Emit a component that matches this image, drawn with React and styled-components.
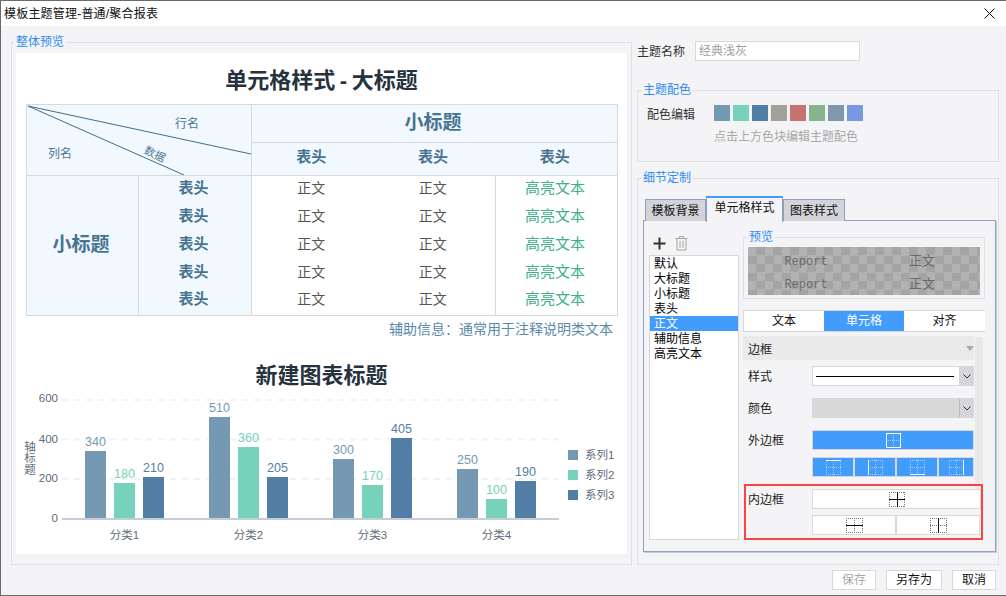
import React from "react";
import styled, { createGlobalStyle } from "styled-components";

const SANS = `"Liberation Sans", "Noto Sans CJK SC", sans-serif`;
const BLUE = "#429cfc";
const LINE = "#d8d8dc";
const GRID = "1px solid #d5d8dc";

const Global = createGlobalStyle`
  html, body { margin: 0; padding: 0; background: #f4f4f6; overflow: hidden; }
  * { box-sizing: border-box; }
  body { font-family: ${SANS}; font-size: 12px; color: #222; }
`;

const Win = styled.div`
  width: 1006px; height: 596px; display: flex; flex-direction: column;
  border-top: 1px solid #6a6a6a; border-bottom: 1px solid #6a6a6a; border-left: 1px solid #6a6a6a;
  background: #f4f4f6;
`;
const TitleBar = styled.div`
  height: 25px; flex: none; background: #fff; display: flex; align-items: center; justify-content: space-between;
  padding: 0 11px 3px 3px; color: #111; font-size: 12px; letter-spacing: 0.2px;
`;
const CloseBtn = styled.svg`
  width: 11px; height: 11px; margin-top: 3px; display: block;
`;
const Main = styled.div`
  flex: none; height: 530px; margin-top: 9px; padding-left: 10px; display: flex; gap: 5px;
`;
const Field = styled.fieldset`
  margin: 0; min-width: 0; border: 1px solid #dfe0e4; display: block;
  padding: ${(p) => p.$pad};
  margin-top: ${(p) => p.$mt || 0}px;
  width: ${(p) => p.$w || "auto"};
  height: ${(p) => p.$h || "auto"};
`;
const Legend = styled.legend`
  padding: 0 2px; margin-left: ${(p) => p.$ml}px; height: 14px; line-height: 14px;
  font-size: 12px; color: #2f8cf2;
`;
const Pane = styled.div`
  background: #fff; width: 611px; height: 501px; display: flex; flex-direction: column; align-items: center;
`;
const BigTitle = styled.div`
  font-size: 22px; font-weight: 700; color: #27323f; height: 51px; line-height: 31px; padding-top: 12px; flex: none;
`;
const Dash = styled.span`
  padding: 0 4.5px;
`;
const Sheet = styled.table`
  table-layout: fixed; border-collapse: collapse; width: 592px; align-self: flex-start; margin-left: 10px; flex: none;
`;
const Cell = styled.td`
  padding: 0 3px 4px 0; text-align: center;
  border-top: ${(p) => (p.$edges.includes("t") ? GRID : "0")};
  border-left: ${(p) => (p.$edges.includes("l") ? GRID : "0")};
  border-bottom: ${(p) => (p.$edges.includes("b") ? GRID : "0")};
  border-right: ${(p) => (p.$edges.includes("r") ? GRID : "0")};
  background: ${(p) => (p.$tint ? "#f1f8fe" : "#fff")};
  color: #555; font-size: 14px; line-height: 20px;
`;
const HeadCell = styled(Cell)`
  color: #47748f; font-weight: 700;
  font-size: ${(p) => (p.$big ? "19px" : "15px")};
  padding-bottom: ${(p) => (p.$big ? "2px" : "4px")};
`;
const HiCell = styled(Cell)`
  color: #3daf8a; font-size: 15px;
`;
const Row = styled.tr`
  height: ${(p) => p.$h}px;
`;
const CornerCell = styled.td`
  position: relative; padding: 0; border: ${GRID}; background: #f1f8fe;
`;
const CornerLines = styled.svg`
  position: absolute; left: 0; top: 0; width: 224px; height: 70px; display: block;
`;
const CornerText = styled.span`
  position: absolute; left: ${(p) => p.$x}px; top: ${(p) => p.$y}px; line-height: 14px; font-size: ${(p) => p.$s || 12}px;
  color: #4d7690; white-space: nowrap;
  transform: translate(-50%, -50%) rotate(${(p) => p.$r || 0}deg);
`;
const Note = styled.div`
  align-self: stretch; height: 26px; line-height: 26px; flex: none; text-align: right; padding-right: 14px;
  color: #5a8aa8; font-size: 14px;
`;
const ChartTitle = styled.div`
  font-size: 22px; font-weight: 700; color: #27323f; height: 48px; line-height: 30px; padding-top: 19px; flex: none;
`;
const ChartSvg = styled.svg`
  width: 611px; height: 164px; display: block; flex: none;
  text { font-family: ${SANS}; }
`;
const AxisTitle = styled.text`
  writing-mode: vertical-rl; text-anchor: middle; font-size: 11.5px; fill: #5c6c7b;
`;

const Side = styled.div`
  width: 362px; flex: none; display: flex; flex-direction: column;
`;
const NameRow = styled.div`
  display: flex; align-items: center; margin-top: 6px; margin-bottom: 22px; height: 20px;
`;
const NameLabel = styled.span`
  width: 58px; font-size: 12px; color: #333; margin-top: -2px;
`;
const NameInput = styled.div`
  width: 165px; height: 20px; background: #fff; border: 1px solid #d7d9dc; color: #a0a0a0; padding-left: 3px;
  line-height: 18px;
`;
const PaletteRow = styled.div`
  display: flex; align-items: center; height: 16px;
`;
const PaletteLabel = styled.span`
  width: 67px; color: #333;
`;
const Swatches = styled.div`
  display: flex; gap: 3px;
`;
const Swatch = styled.div`
  width: 16px; height: 16px; background: ${(p) => p.$c};
`;
const Hint = styled.div`
  margin: 8px 0 0 67px; color: #a8a8a8; line-height: 16px;
`;
const Tabs = styled.div`
  display: flex; align-items: flex-end; padding-left: 2px; height: 25px; position: relative; z-index: 1;
`;
const Tab = styled.div`
  width: ${(p) => p.$w}px; text-align: center; color: #111; font-size: 12px;
  ${(p) =>
    p.$on
      ? `height: 26px; margin-bottom: -1px; background: #f4f4f6; border-top: 2px solid ${BLUE}; border-left: 1px solid #8aa0bd; border-right: 1px solid #8aa0bd; line-height: 21px;`
      : `height: 22px; background: #d3d3d9; border: 1px solid #8aa0bd; border-bottom: 0; line-height: 22px;`}
`;
const Panel = styled.div`
  width: 353px; height: 332px; border: 1px solid #8fa3c0; box-shadow: 1px 1px 0 #c9ccd2;
  display: flex; padding-left: 5px; margin-top: -1px;
`;
const ListCol = styled.div`
  width: 90px; flex: none; padding-top: 14px;
`;
const Tools = styled.div`
  display: flex; align-items: center; gap: 9px; height: 16px; margin-bottom: 4px; padding-left: 4px;
`;
const ToolIcon = styled.svg`
  display: block; width: ${(p) => p.$w}px; height: 16px;
`;
const StyleList = styled.div`
  height: 285px; background: #fff; border: 1px solid ${LINE};
`;
const StyleItem = styled.div`
  height: 15px; line-height: 17px; padding-left: 4px; font-size: 12px; color: ${(p) => (p.$on ? "#fff" : "#000")};
  background: ${(p) => (p.$on ? BLUE : "transparent")};
`;
const EditCol = styled.div`
  width: 242px; margin-left: 4px; flex: none; padding-top: 9px; position: relative;
`;
const Checker = styled.div`
  width: 232px; height: 48px; display: grid; grid-template-columns: 116px 116px; grid-auto-rows: 23px; padding-top: 2px;
  background: repeating-conic-gradient(#a4a4a4 0 25%, #b2b2b2 0 50%) 0 0 / 17px 17px;
  color: #6a6a6a; text-align: center; line-height: 23px; font-size: 13px;
`;
const Mono = styled.span`
  font-family: "Liberation Mono", monospace; font-size: 12px; padding-top: 2px;
`;
const Seg = styled.div`
  display: grid; grid-template-columns: 80px 80px 81px; height: 22px; margin-top: 11px; background: #fff;
  border-top: 1px solid ${LINE}; border-bottom: 1px solid ${LINE}; border-left: 1px solid ${LINE};
`;
const SegItem = styled.div`
  text-align: center; line-height: 20px; color: ${(p) => (p.$on ? "#fff" : "#111")};
  background: ${(p) => (p.$on ? BLUE : "transparent")};
`;
const Form = styled.div`
  position: relative; margin-top: 4px;
`;
const Scroll = styled.div`
  position: absolute; left: 232px; top: 1px; width: 8px; height: 157px; background: #e8e8e8; border-radius: 3px;
`;
const GroupHead = styled.div`
  width: 231px; height: 24px; background: #eaeaea; display: flex; align-items: center; justify-content: space-between;
  padding: 0 0 0 5px; color: #222; font-size: 12px; margin-bottom: 6px;
`;
const Caret = styled.i`
  width: 0; height: 0; border-left: 4px solid transparent; border-right: 4px solid transparent;
  border-top: 5px solid #a8a8a8; margin-right: 0;
`;
const FormRow = styled.div`
  display: flex; align-items: center; margin-bottom: ${(p) => p.$mb ?? 12}px; position: relative;
`;
const FormLabel = styled.span`
  width: 69px; padding-left: 5px; flex: none; color: #222; font-size: 12px; margin-top: -2px;
`;
const SelectBox = styled.div`
  width: 162px; height: 20px; display: flex; align-items: stretch; border: 1px solid ${LINE};
  background: ${(p) => (p.$fill ? "#d8d8d8" : "#fff")};
`;
const SelectMain = styled.div`
  flex: 1; display: flex; align-items: center; padding: 0 3px;
`;
const SolidLine = styled.div`
  width: 138px; height: 1px; background: #000;
`;
const Chevron = styled.div`
  width: 14px; flex: none; background: #d6d6d9; border-left: 1px solid ${(p) => (p.$dark ? "#bbb" : "#d6d6d9")};
  display: flex; align-items: center; justify-content: center;
`;
const ChevronSvg = styled.svg`
  width: 8px; height: 5px; display: block;
`;
const IconBtn = styled.div`
  height: ${(p) => p.$h || 20}px; display: flex; align-items: center; justify-content: center;
  border: 1px solid ${LINE}; background: ${(p) => (p.$on ? BLUE : "#fff")}; width: ${(p) => (p.$w ? p.$w + "px" : "auto")};
`;
const OuterFour = styled.div`
  display: grid; grid-template-columns: 42px 42px 42px 36px; width: 162px;
`;
const FlagBox = styled.div`
  width: 239px; margin-left: 1px; height: 56px; border: 2px solid #fb4346; position: relative;
  padding-top: 3px; margin-top: -5px;
`;
const InnerRow = styled.div`
  display: flex; align-items: center; height: 20px; margin-bottom: 6px;
`;
const InnerLabel = styled.span`
  width: 66px; flex: none; padding-left: 2px; color: #222; margin-top: -2px;
`;
const InnerTwo = styled.div`
  display: grid; grid-template-columns: 84px 84px; width: 168px;
`;
const Foot = styled.div`
  flex: none; display: flex; justify-content: flex-end; gap: 10px; padding: 5px 10px 0 0; height: 25px;
`;
const FootBtn = styled.div`
  width: ${(p) => p.$w}px; height: 20px; border: 1px solid ${LINE}; background: #fff; text-align: center; line-height: 18px;
  color: ${(p) => (p.$off ? "#a8a8a8" : "#111")};
`;

const GridLines = ({ w = 15, h = 15, solid = [], solidColor, dotColor }) => {
  const mx = Math.floor(w / 2) + 0.5, my = Math.floor(h / 2) + 0.5;
  const lines = {
    top: [0, 0.5, w, 0.5], bottom: [0, h - 0.5, w, h - 0.5], left: [0.5, 0, 0.5, h], right: [w - 0.5, 0, w - 0.5, h],
    h: [0, my, w, my], v: [mx, 0, mx, h],
  };
  const keys = Object.keys(lines);
  const ordered = [...keys.filter((k) => !solid.includes(k)), ...keys.filter((k) => solid.includes(k))];
  return (
    <svg width={w} height={h} viewBox={`0 0 ${w} ${h}`} style={{ display: "block" }}>
      {ordered.map((k) => {
        const [a, b, c, d] = lines[k];
        const on = solid.includes(k);
        return <line key={k} x1={a} y1={b} x2={c} y2={d} stroke={on ? solidColor : dotColor} strokeWidth="1" strokeDasharray={on ? undefined : "1 1"} />;
      })}
    </svg>
  );
};

const Down = () => (
  <ChevronSvg viewBox="0 0 8 5"><path d="M.5.5 4 4 7.5.5" fill="none" stroke="#333" strokeWidth="1" /></ChevronSvg>
);

const colors = ["#7599b3", "#76d2ba", "#527ea6"];
const groups = [
  { name: "分类1", x: [85, 114, 143], v: [340, 180, 210], top: [451, 483, 477] },
  { name: "分类2", x: [209, 238, 267], v: [510, 360, 205], top: [417, 447, 477] },
  { name: "分类3", x: [333, 362, 391], v: [300, 170, 405], top: [459, 485, 438] },
  { name: "分类4", x: [457, 486, 515], v: [250, 100, 190], top: [469, 499, 481] },
];
const palette = ["#7599b3", "#76d2ba", "#527ea6", "#a3a098", "#c87372", "#85b48f", "#8097ae", "#7a98e0"];
const styleNames = ["默认", "大标题", "小标题", "表头", "正文", "辅助信息", "高亮文本"];

const Chart = () => (
  <ChartSvg viewBox="16 390 611 164">
    {[400, 439.5, 479].map((y) => (
      <line key={y} x1="62" x2="559" y1={y} y2={y} stroke="#eef3f7" strokeWidth="2" strokeDasharray="6 6" />
    ))}
    <rect x="62" y="518" width="497" height="2" fill="#c3ced8" />
    {[["600", 402], ["400", 443], ["200", 482], ["0", 522]].map(([t, y]) => (
      <text key={t} x="58" y={y} textAnchor="end" fontSize="11.5" fill="#5c6c7b">{t}</text>
    ))}
    <AxisTitle x="29" y="458">轴标题</AxisTitle>
    {groups.map((g) => (
      <g key={g.name}>
        {g.x.map((x, i) => (
          <g key={x}>
            <rect x={x} y={g.top[i]} width="21" height={518 - g.top[i]} fill={colors[i]} />
            <text x={x + 10.5} y={g.top[i] - 5} textAnchor="middle" fontSize="12.5" fill={colors[i]}>{g.v[i]}</text>
          </g>
        ))}
        <text x={g.x[1] + 10.5} y="539" textAnchor="middle" fontSize="11.5" fill="#5c6c7b">{g.name}</text>
      </g>
    ))}
    {colors.map((c, i) => (
      <g key={c}>
        <rect x="568" y={450 + i * 20} width="10" height="10" fill={c} />
        <text x="585" y={459 + i * 20} fontSize="11.5" fill="#5c6c7b">系列{i + 1}</text>
      </g>
    ))}
  </ChartSvg>
);

const PreviewTable = () => (
  <Sheet>
    <colgroup>
      <col style={{ width: 112 }} /><col style={{ width: 113 }} /><col style={{ width: 122 }} /><col style={{ width: 122 }} /><col style={{ width: 122 }} />
    </colgroup>
    <tbody>
      <Row $h={38}>
        <CornerCell colSpan={2} rowSpan={2}>
          <CornerLines viewBox="0 0 224 70">
            <line x1="1" y1="1" x2="224" y2="49" stroke="#3f6f8a" strokeWidth="1" />
            <line x1="1" y1="1" x2="157" y2="70" stroke="#3f6f8a" strokeWidth="1" />
          </CornerLines>
          <CornerText $x={160} $y={19}>行名</CornerText>
          <CornerText $x={33} $y={49}>列名</CornerText>
          <CornerText $x={128} $y={49} $r={25} $s={11}>数据</CornerText>
        </CornerCell>
        <HeadCell colSpan={3} $tint $big $edges="tlbr">小标题</HeadCell>
      </Row>
      <Row $h={33}>
        <HeadCell $tint $edges="tlb">表头</HeadCell>
        <HeadCell $tint $edges="tb">表头</HeadCell>
        <HeadCell $tint $edges="tbr">表头</HeadCell>
      </Row>
      {[0, 1, 2, 3, 4].map((i) => {
        const bottom = i === 4 ? "b" : "";
        return (
          <Row key={i} $h={28}>
            {i === 0 && <HeadCell rowSpan={5} $tint $big $edges="tlbr">小标题</HeadCell>}
            <HeadCell $tint $edges={"lr" + bottom}>表头</HeadCell>
            <Cell $edges={bottom}>正文</Cell>
            <Cell $edges={bottom}>正文</Cell>
            <HiCell $edges={"lr" + bottom}>高亮文本</HiCell>
          </Row>
        );
      })}
    </tbody>
  </Sheet>
);

export default function App() {
  return (
    <>
      <Global />
      <Win>
        <TitleBar>
          <span>模板主题管理-普通/聚合报表</span>
          <CloseBtn viewBox="0 0 11 11"><path d="M.5.5l10 10M10.5.5l-10 10" stroke="#111" strokeWidth="1" fill="none" /></CloseBtn>
        </TitleBar>
        <Main>
          <Field $pad="4px 3px 0 4px" $w="621px" $h="530px">
            <Legend $ml={-2}>整体预览</Legend>
            <Pane>
              <BigTitle>单元格样式<Dash>-</Dash>大标题</BigTitle>
              <PreviewTable />
              <Note>辅助信息：通常用于注释说明类文本</Note>
              <ChartTitle>新建图表标题</ChartTitle>
              <Chart />
            </Pane>
          </Field>
          <Side>
            <NameRow>
              <NameLabel>主题名称</NameLabel>
              <NameInput>经典浅灰</NameInput>
            </NameRow>
            <Field $pad="8px 8px 0 9px" $h="79px">
              <Legend $ml={-6}>主题配色</Legend>
              <PaletteRow>
                <PaletteLabel>配色编辑</PaletteLabel>
                <Swatches>{palette.map((c) => <Swatch key={c} $c={c} />)}</Swatches>
              </PaletteRow>
              <Hint>点击上方色块编辑主题配色</Hint>
            </Field>
            <Field $pad="11px 1px 0 5px" $h="394px" $mt={9}>
              <Legend $ml={-2}>细节定制</Legend>
              <Tabs>
                <Tab $w={61}>模板背景</Tab>
                <Tab $w={77} $on>单元格样式</Tab>
                <Tab $w={62}>图表样式</Tab>
              </Tabs>
              <Panel>
                <ListCol>
                  <Tools>
                    <ToolIcon $w={13} viewBox="0 0 13 16"><path d="M6.5 2.5v12M.5 8.5h12" stroke="#333" strokeWidth="2" fill="none" /></ToolIcon>
                    <ToolIcon $w={13} viewBox="0 0 13 16"><path d="M.5 3.5h12M4.5 3.5v-2h4v2M2 3.5v11.5h9V3.5M5 6v7M8 6v7" stroke="#a4a4a4" strokeWidth="1" fill="none" /></ToolIcon>
                  </Tools>
                  <StyleList>
                    {styleNames.map((n) => <StyleItem key={n} $on={n === "正文"}>{n}</StyleItem>)}
                  </StyleList>
                </ListCol>
                <EditCol>
                  <Field $pad="3px 4px 3px 4px" $w="242px" $h="69px">
                    <Legend $ml={-1}>预览</Legend>
                    <Checker>
                      <Mono>Report</Mono><span>正文</span>
                      <Mono>Report</Mono><span>正文</span>
                    </Checker>
                  </Field>
                  <Seg>
                    <SegItem>文本</SegItem>
                    <SegItem $on>单元格</SegItem>
                    <SegItem>对齐</SegItem>
                  </Seg>
                  <Form>
                    <Scroll />
                    <GroupHead>边框<Caret /></GroupHead>
                    <FormRow>
                      <FormLabel>样式</FormLabel>
                      <SelectBox>
                        <SelectMain><SolidLine /></SelectMain>
                        <Chevron><Down /></Chevron>
                      </SelectBox>
                    </FormRow>
                    <FormRow>
                      <FormLabel>颜色</FormLabel>
                      <SelectBox $fill>
                        <SelectMain />
                        <Chevron $dark><Down /></Chevron>
                      </SelectBox>
                    </FormRow>
                    <FormRow $mb={7}>
                      <FormLabel>外边框</FormLabel>
                      <IconBtn $on $w={162}>
                        <GridLines solid={["top", "bottom", "left", "right"]} solidColor="#fff" dotColor="#a9d2fd" />
                      </IconBtn>
                    </FormRow>
                    <FormRow>
                      <FormLabel />
                      <OuterFour>
                        {["top", "left", "bottom", "right"].map((s) => (
                          <IconBtn key={s} $on>
                            <GridLines solid={[s]} solidColor="#fff" dotColor="#a0cdfd" />
                          </IconBtn>
                        ))}
                      </OuterFour>
                    </FormRow>
                    <FlagBox>
                      <InnerRow>
                        <InnerLabel>内边框</InnerLabel>
                        <IconBtn $w={169}>
                          <GridLines w={16} solid={["h", "v"]} solidColor="#111" dotColor="#777" />
                        </IconBtn>
                      </InnerRow>
                      <InnerRow>
                        <InnerLabel />
                        <InnerTwo>
                          <IconBtn><GridLines w={17} solid={["h"]} solidColor="#111" dotColor="#777" /></IconBtn>
                          <IconBtn><GridLines w={17} solid={["v"]} solidColor="#111" dotColor="#777" /></IconBtn>
                        </InnerTwo>
                      </InnerRow>
                    </FlagBox>
                  </Form>
                </EditCol>
              </Panel>
            </Field>
          </Side>
        </Main>
        <Foot>
          <FootBtn $w={44} $off>保存</FootBtn>
          <FootBtn $w={56}>另存为</FootBtn>
          <FootBtn $w={44}>取消</FootBtn>
        </Foot>
      </Win>
    </>
  );
}
